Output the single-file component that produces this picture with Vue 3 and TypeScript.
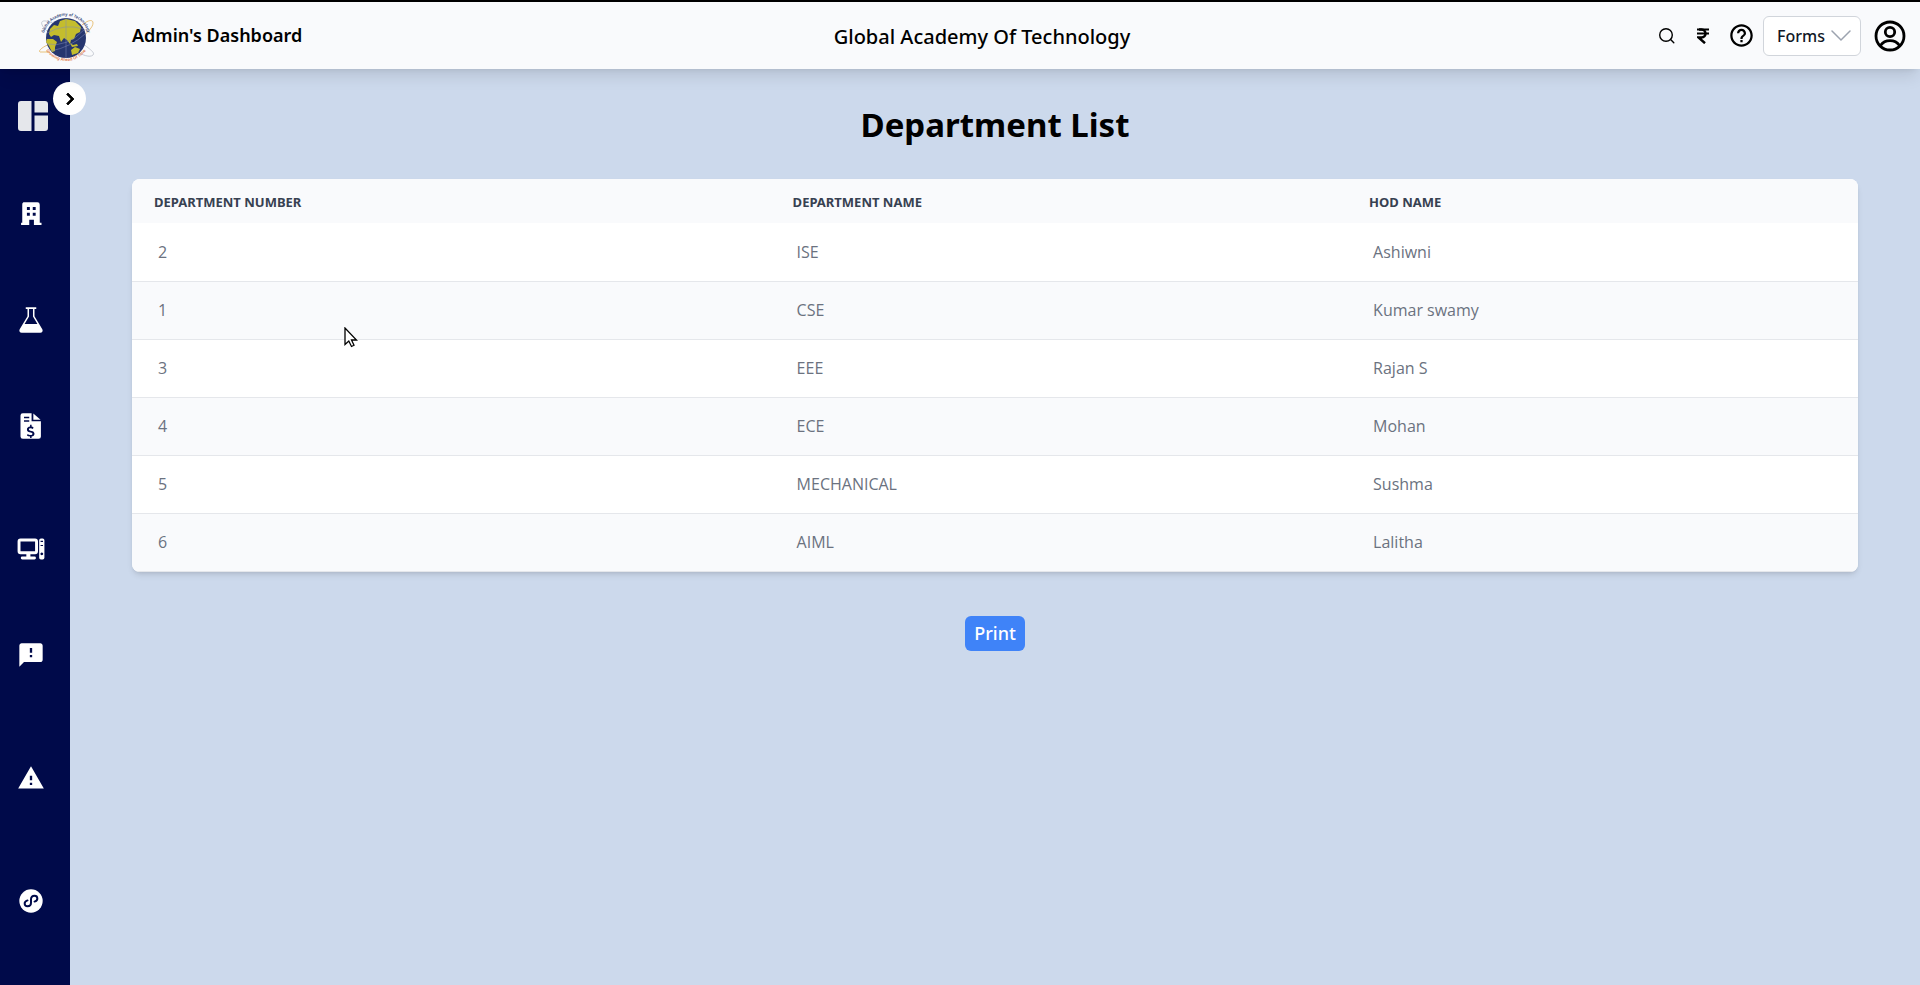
<script setup lang="ts">
import { ref } from 'vue'

interface Department {
  id: number
  name: string
  hod: string
}

interface NavItem {
  label: string
  path: string
  startsGroup?: boolean
}

const departments: Department[] = [
  { id: 2, name: 'ISE', hod: 'Ashiwni' },
  { id: 1, name: 'CSE', hod: 'Kumar swamy' },
  { id: 3, name: 'EEE', hod: 'Rajan S' },
  { id: 4, name: 'ECE', hod: 'Mohan' },
  { id: 5, name: 'MECHANICAL', hod: 'Sushma' },
  { id: 6, name: 'AIML', hod: 'Lalitha' },
]

const navItems: NavItem[] = [
  {
    label: 'Departments',
    path: 'M5.500 2h12a2 2 0 0 1 2 2v15.500h1.500v2h-6.500V17h-4v4.500h-7v-2h1V4a2 2 0 0 1 1-2zM8.500 6v2.500H11V6zM13.500 6v2.500H16V6zM8.500 11v2.500H11V11zM13.500 11v2.500H16V11z',
  },
  {
    label: 'Laboratories',
    path: 'M7.500 1h9v1.500H15v6.200l6.700 11.200c.8 1.500-.2 3.100-1.700 3.100H4c-1.500 0-2.500-1.600-1.700-3.100L9 8.700V2.500H7.500zM10.300 2.500v6.600L6.500 15.500h11l-3.800-6.400V2.500z',
  },
  {
    label: 'Fees',
    path: 'M5 1h7.500v7H20.500v13a2 2 0 0 1-2 2H5a2 2 0 0 1-2-2V3a2 2 0 0 1 2-2zM14 1.300L20.200 6.700H14zM6 4v1.300h4.500V4zM6 7v1.300h4.500V7zM11.200 11v1.500c-1.600.2-2.700 1.200-2.700 2.500 0 3.200 4.800 2.100 4.800 3.600 0 .7-.7 1.100-1.600 1.100-1 0-1.900-.4-2.500-.9l-.7 1.300c.7.5 1.600.9 2.700 1v1.200h1.300v-1.200c1.500-.2 2.500-1.200 2.500-2.500 0-3.200-4.800-2.200-4.800-3.700 0-.6.600-1 1.400-1s1.500.3 2 .6l.6-1.300c-.5-.4-1.100-.6-1.700-.7V11z',
  },
  {
    label: 'Computers',
    startsGroup: true,
    path: 'M3 3h12.500a2.500 2.500 0 0 1 2.500 2.500v8.500a2.500 2.500 0 0 1-2.500 2.500h-4v2H15a1.200 1.200 0 0 1 0 2.500H4.500a1.200 1.200 0 0 1 0-2.500H8v-2H3a2.500 2.500 0 0 1-2.500-2.500V5.500A2.500 2.500 0 0 1 3 3zM3 5.500v8.500h12.500V5.500zM20.500 3h1.500A1.500 1.500 0 0 1 23.500 4.500v15a1.500 1.500 0 0 1-1.500 1.500h-1.500A1.500 1.500 0 0 1 19 19.500V4.500A1.500 1.500 0 0 1 20.500 3zM20.200 5v1h2.100V5zM20.200 8.500v1h2.100v-1zM21.250 15a1.200 1.200 0 1 0 .01 0z',
  },
  {
    label: 'Feedback',
    path: 'M20 2H4c-1.100 0-1.990.9-1.990 2L2 22l4-4h14c1.100 0 2-.9 2-2V4c0-1.100-.9-2-2-2zM13 14h-2v-2h2v2zM13 10h-2V6h2v4z',
  },
  {
    label: 'Alerts',
    startsGroup: true,
    path: 'M1 21h22L12 2 1 21zM13 18h-2v-2h2v2zM13 14h-2v-4h2v4z',
  },
  {
    label: 'Integrations',
    startsGroup: true,
    path: 'M12 2a10 10 0 1 0 0 20 10 10 0 0 0 0-20z',
  },
]

const expanded = ref(false)
const printPage = () => window.print()
</script>

<template>
  <div class="app">
    <header class="topbar">
      <div class="brand">
        <svg class="logo" viewBox="0 0 56 56" role="img" aria-label="Global Academy of Technology">
          <defs>
            <path id="arc-top" d="M6 35a22.500 22.500 0 1 1 44 0" />
            <path id="arc-bottom" d="M4 29a24 24 0 0 0 48 0" />
          </defs>
          <g fill="none" stroke-width="0.800">
            <path d="M10 24C3 18 1 12 8 13s20 8 30 17 20 14 17 17-11 0-17-4" stroke="#b9bec8" />
            <path d="M12 36C4 39 0 43 2 44h10M44 17c6-5 11-6 11-2s-5 9-12 15" stroke="#e3b45c" />
          </g>
          <circle cx="28" cy="30" r="20" fill="#26366f" />
          <g fill="#c4bd2d">
            <path d="M12 21l4-4 4 1 2-5 6-2 9 2 6 6-1 5-4 2-2 5-3 1-1 4-3-4-3-2-3 4-2-6-5-1-3 2-2-3z" />
            <path d="M9 31l6 0 4 3-2 5 0 4-3 1-3-6-3-4zM33 42l4-3 5 2-2 4-6 2zM32 35l3 2 4-1 1 2-6 1z" />
          </g>
          <path d="M9 36q20 4 38-15M13 43q20-4 34-17M28 10v40M9 25q18-10 36-4" fill="none" stroke="#7e88b8" stroke-width="0.500" />
          <text class="logo-text"><textPath href="#arc-top" startOffset="50%" text-anchor="middle">Global Academy of Technology</textPath></text>
          <text class="logo-text logo-motto"><textPath href="#arc-bottom" startOffset="50%" text-anchor="middle">Growing Ahead Of Time</textPath></text>
        </svg>
        <span class="role">Admin's Dashboard</span>
      </div>

      <div class="school">Global Academy Of Technology</div>

      <div class="actions">
        <button class="icon-button search" type="button" aria-label="Search">
          <svg viewBox="0 0 18 18" fill="none" stroke="#000" stroke-width="1.400" stroke-linecap="round">
            <circle cx="8" cy="8" r="6.300" /><path d="M12.600 12.600l3.200 3.200" />
          </svg>
        </button>
        <button class="icon-button rupee" type="button" aria-label="Payments">
          <svg viewBox="0 0 12 16" fill="none" stroke="#000" stroke-width="2.500">
            <path d="M0 1.500h12M0 5.500h12" stroke-width="2.200" /><path d="M2 1.500h2.500c5.300 0 5.300 8 0 8H1.500l6.500 5.700" />
          </svg>
        </button>
        <button class="icon-button help" type="button" aria-label="Help">
          <svg viewBox="0 0 24 24">
            <path d="M11 18h2v-2h-2v2zm1-16C6.480 2 2 6.480 2 12s4.480 10 10 10 10-4.480 10-10S17.520 2 12 2zm0 18c-4.410 0-8-3.590-8-8s3.590-8 8-8 8 3.590 8 8-3.590 8-8 8zm0-14c-2.210 0-4 1.790-4 4h2c0-1.100.9-2 2-2s2 .9 2 2c0 2-3 1.750-3 5h2c0-2.250 3-2.500 3-5 0-2.210-1.790-4-4-4z" />
          </svg>
        </button>
        <div class="forms">
          <select aria-label="Forms"><option>Forms</option></select>
          <svg class="chevron" viewBox="0 0 20 12" fill="none" stroke="#9ca3af" stroke-width="1.500" stroke-linecap="round">
            <path d="M1 1l9 9 9-9" />
          </svg>
        </div>
        <button class="icon-button account" type="button" aria-label="Account">
          <svg viewBox="0 0 32 32" fill="none" stroke="#000" stroke-width="2.800">
            <circle cx="16" cy="16" r="14" /><circle cx="16" cy="12" r="4.700" />
            <path d="M6.500 25.500c4.500-6.500 14.500-6.500 19 0" />
          </svg>
        </button>
      </div>
    </header>

    <div class="body">
      <nav class="sidebar" aria-label="Main">
        <button class="toggle" type="button" :aria-expanded="expanded" aria-label="Expand menu" @click="expanded = !expanded">
          <svg viewBox="0 0 24 24"><path d="M10 6L8.590 7.410 13.170 12l-4.580 4.590L10 18l6-6z" stroke="#000" stroke-width="0.800" /></svg>
        </button>
        <a class="nav-link home" href="#" aria-label="Dashboard">
          <svg viewBox="0 0 30 30" fill="#e5e7eb">
            <path d="M3 0h10.500v30H3a3 3 0 0 1-3-3V3a3 3 0 0 1 3-3zM16.500 0H27a3 3 0 0 1 3 3v8.500H16.500zM16.500 14.500H30V27a3 3 0 0 1-3 3H16.500z" />
          </svg>
        </a>
        <a
          v-for="item in navItems"
          :key="item.label"
          class="nav-link"
          :class="{ 'group-start': item.startsGroup }"
          href="#"
          :aria-label="item.label"
        >
          <svg viewBox="0 0 24 24" fill="#fff" fill-rule="evenodd">
            <path :d="item.path" />
            <path
              v-if="item.label === 'Integrations'"
              d="M9 11.500c-3.500 1-3 5 0 5 2 0 3-1.200 3-3v-3c0-1.800 1-3 3-3 3 0 3.500 4 0 5"
              fill="none"
              stroke="#000a4a"
              stroke-width="1.700"
              stroke-linecap="round"
            />
          </svg>
        </a>
      </nav>

      <main class="content">
        <h1>Department List</h1>
        <div class="card">
          <table>
            <colgroup><col class="col-number" /><col class="col-name" /><col /></colgroup>
            <thead>
              <tr>
                <th scope="col">Department Number</th>
                <th scope="col">Department Name</th>
                <th scope="col">HOD Name</th>
              </tr>
            </thead>
            <tbody>
              <tr v-for="department in departments" :key="department.id">
                <td>{{ department.id }}</td>
                <td>{{ department.name }}</td>
                <td>{{ department.hod }}</td>
              </tr>
            </tbody>
          </table>
        </div>
        <button class="print" type="button" @click="printPage">Print</button>
      </main>
    </div>

    <svg class="pointer" viewBox="0 0 14 21" aria-hidden="true">
      <path d="M1 1v16.500l3.800-3.500 2.700 5.500 2.500-1.200-2.500-5.300H12.500z" fill="#fff" stroke="#000" stroke-width="1.300" />
    </svg>
  </div>
</template>

<style>
body {
  margin: 0;
  background: #ccd9ec;
}
</style>

<style scoped>
* {
  box-sizing: border-box;
}

.app {
  display: flex;
  flex-direction: column;
  min-height: 100vh;
  font-family: 'Noto Sans', sans-serif;
  color: #000;
}

button,
select {
  font-family: inherit;
}

svg {
  display: block;
}

.topbar {
  position: relative;
  z-index: 2;
  display: grid;
  grid-template-columns: 1fr auto 1fr;
  align-items: center;
  height: 69px;
  padding: 0 14px 0 38px;
  border-top: 2px solid #000;
  background: #f9fafc;
  box-shadow: 0 10px 15px -3px rgba(0, 0, 0, 0.1), 0 4px 6px -4px rgba(0, 0, 0, 0.1);
}

.brand {
  display: flex;
  align-items: center;
  gap: 38px;
}

.logo {
  width: 56px;
  height: 56px;
  overflow: visible;
}

.logo-text {
  font-size: 4px;
  font-weight: 600;
  fill: #26366f;
}

.logo-motto {
  fill: #e0713a;
}

.role {
  padding-bottom: 2px;
  font-size: 18px;
  font-weight: 600;
  line-height: 28px;
}

.school {
  padding: 2px 0 0 20px;
  font-size: 20px;
  font-weight: 500;
  line-height: 28px;
}

.actions {
  display: flex;
  justify-content: flex-end;
  align-items: center;
}

.icon-button {
  padding: 0;
  border: 0;
  background: none;
}

.search svg {
  width: 18px;
  height: 18px;
}

.rupee {
  margin-left: 21px;
}

.rupee svg {
  width: 12px;
  height: 16px;
}

.help {
  margin: 0 8px 0 19px;
}

.help svg {
  width: 27px;
  height: 27px;
}

.forms {
  position: relative;
  margin-right: 13px;
}

.forms select {
  width: 98px;
  height: 40px;
  padding: 0 13px;
  appearance: none;
  border: 1px solid #d1d5db;
  border-radius: 6px;
  background: #fff;
  color: #111827;
  font-size: 16px;
  font-weight: 500;
}

.chevron {
  position: absolute;
  top: 14px;
  right: 10px;
  width: 20px;
  height: 12px;
  pointer-events: none;
}

.account svg {
  width: 32px;
  height: 32px;
}

.body {
  display: flex;
  flex: 1;
}

.sidebar {
  position: relative;
  flex: none;
  width: 70px;
  padding-top: 2px;
  background: #000a4a;
}

.toggle {
  position: absolute;
  top: 13px;
  right: -16px;
  display: grid;
  place-items: center;
  width: 33px;
  height: 33px;
  padding: 0;
  border: 0;
  border-radius: 50%;
  background: #fff;
}

.toggle svg {
  width: 24px;
  height: 24px;
}

.nav-link {
  display: flex;
  align-items: center;
  height: 106px;
  padding-left: 17px;
}

.nav-link svg {
  width: 28px;
  height: 28px;
}

.nav-link.home {
  height: 90px;
}

.home svg {
  width: 32px;
  height: 30px;
}

.group-start {
  margin-top: 17px;
}

.content {
  display: flex;
  flex: 1;
  flex-direction: column;
  align-items: center;
  padding: 36px 62px;
}

h1 {
  margin: 0 0 34px;
  font-size: 33px;
  font-weight: 700;
  line-height: 40px;
}

.card {
  width: 100%;
  overflow: hidden;
  border-radius: 8px;
  background: #fff;
  box-shadow: 0 4px 6px -1px rgba(0, 0, 0, 0.1), 0 2px 4px -2px rgba(0, 0, 0, 0.1);
}

table {
  width: 100%;
  border-collapse: collapse;
  table-layout: fixed;
  text-align: left;
}

.col-number {
  width: 37%;
}

.col-name {
  width: 33.4%;
}

th {
  height: 44px;
  padding: 2px 22px 0;
  background: #f9fafc;
  color: #374151;
  font-size: 13px;
  font-weight: 700;
  text-transform: uppercase;
}

td {
  height: 58px;
  padding: 0 26px;
  border-bottom: 1px solid #e5e7eb;
  color: #6b7280;
  font-family: 'Open Sans', 'Noto Sans', sans-serif;
  font-size: 16px;
}

tbody tr:nth-child(even) {
  background: #f9fafc;
}

.print {
  margin-top: 44px;
  padding: 0 9px;
  border: 0;
  border-radius: 6px;
  background: #3f83f8;
  color: #fff;
  font-size: 18px;
  font-weight: 500;
  line-height: 35px;
}

.pointer {
  position: absolute;
  z-index: 3;
  top: 327px;
  left: 344px;
  width: 14px;
  height: 21px;
}
</style>
